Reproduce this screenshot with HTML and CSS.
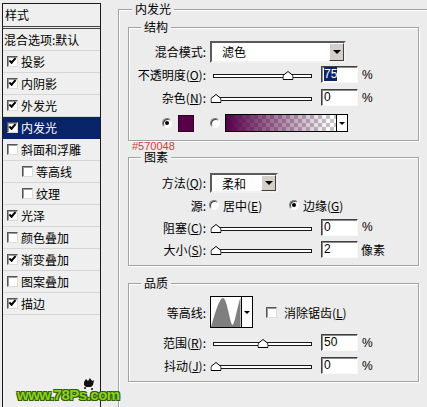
FILE: index.html
```html
<!DOCTYPE html>
<html lang="zh-CN">
<head>
    <meta charset="UTF-8">
    <title>图层样式 - 内发光</title>
    <link rel="stylesheet" href="styles.css">
</head>
<body>
    <div class="dialog">

        <div class="styles">
            <div class="styles-head">样式</div>
            <div class="style-item plain">混合选项:默认</div>
            <div class="style-item"><span class="check on"></span>投影</div>
            <div class="style-item"><span class="check on"></span>内阴影</div>
            <div class="style-item"><span class="check on"></span>外发光</div>
            <div class="style-item active"><span class="check on"></span>内发光</div>
            <div class="style-item"><span class="check"></span>斜面和浮雕</div>
            <div class="style-item sub"><span class="check"></span>等高线</div>
            <div class="style-item sub"><span class="check"></span>纹理</div>
            <div class="style-item"><span class="check on"></span>光泽</div>
            <div class="style-item"><span class="check"></span>颜色叠加</div>
            <div class="style-item"><span class="check on"></span>渐变叠加</div>
            <div class="style-item"><span class="check"></span>图案叠加</div>
            <div class="style-item"><span class="check on"></span>描边</div>
        </div>

        <div class="group outer">
            <span class="group-title outer-title">内发光</span>

            <!-- 结构 -->
            <div class="group block-structure">
                <span class="group-title">结构</span>
                <div class="row">
                    <span class="lbl">混合模式:</span>
                    <div class="select">
                        <span class="select-text">滤色</span>
                        <span class="select-btn"><i class="arrow"></i></span>
                    </div>
                </div>
                <div class="row">
                    <span class="lbl">不透明度(<u>O</u>):</span>
                    <div class="slider"><span class="thumb" style="left: 76%;"><svg width="11" height="9" viewBox="0 0 11 9"><path d="M0.5 8.5V4.5L5.5 0.5L10.5 4.5V8.5Z" fill="#fff" stroke="#000"/></svg></span></div>
                    <span class="field"><span class="sel">75</span></span>
                    <span class="unit">%</span>
                </div>
                <div class="row">
                    <span class="lbl">杂色(<u>N</u>):</span>
                    <div class="slider"><span class="thumb" style="left: 2%;"><svg width="11" height="9" viewBox="0 0 11 9"><path d="M0.5 8.5V4.5L5.5 0.5L10.5 4.5V8.5Z" fill="#fff" stroke="#000"/></svg></span></div>
                    <span class="field">0</span>
                    <span class="unit">%</span>
                </div>
                <div class="row colors">
                    <span class="radio on"></span>
                    <span class="swatch"></span>
                    <span class="radio second"></span>
                    <div class="gradient">
                        <span class="gradient-bar"></span>
                        <span class="gradient-btn"><i class="arrow small"></i></span>
                    </div>
                </div>
            </div>

            <div class="hex">#570048</div>

            <!-- 图素 -->
            <div class="group block-elements">
                <span class="group-title">图素</span>
                <div class="row">
                    <span class="lbl">方法(<u>Q</u>):</span>
                    <div class="select small">
                        <span class="select-text">柔和</span>
                        <span class="select-btn"><i class="arrow"></i></span>
                    </div>
                </div>
                <div class="row short">
                    <span class="lbl">源:</span>
                    <span class="radio first"></span>
                    <span class="opt wide">居中(<u>E</u>)</span>
                    <span class="radio on"></span>
                    <span class="opt">边缘(<u>G</u>)</span>
                </div>
                <div class="row short">
                    <span class="lbl">阻塞(<u>C</u>):</span>
                    <div class="slider"><span class="thumb" style="left: 2%;"><svg width="11" height="9" viewBox="0 0 11 9"><path d="M0.5 8.5V4.5L5.5 0.5L10.5 4.5V8.5Z" fill="#fff" stroke="#000"/></svg></span></div>
                    <span class="field">0</span>
                    <span class="unit">%</span>
                </div>
                <div class="row">
                    <span class="lbl">大小(<u>S</u>):</span>
                    <div class="slider"><span class="thumb" style="left: 2%;"><svg width="11" height="9" viewBox="0 0 11 9"><path d="M0.5 8.5V4.5L5.5 0.5L10.5 4.5V8.5Z" fill="#fff" stroke="#000"/></svg></span></div>
                    <span class="field">2</span>
                    <span class="unit cjk">像素</span>
                </div>
            </div>

            <!-- 品质 -->
            <div class="group block-quality">
                <span class="group-title">品质</span>
                <div class="row tall">
                    <span class="lbl">等高线:</span>
                    <div class="contour">
                        <svg width="30" height="30" viewBox="0 0 30 30">
                            <path d="M0 30C3 20 8 1 12 1C16 1 19 27 21.5 28C24 27 27 6 29.5 1L29.5 30Z" fill="#7f7f7f"/>
                        </svg>
                        <span class="contour-btn"><i class="arrow small"></i></span>
                    </div>
                    <span class="check aa"></span>
                    <span class="opt">消除锯齿(<u>L</u>)</span>
                </div>
                <div class="row gap">
                    <span class="lbl">范围(<u>R</u>):</span>
                    <div class="slider"><span class="thumb" style="left: 50%;"><svg width="11" height="9" viewBox="0 0 11 9"><path d="M0.5 8.5V4.5L5.5 0.5L10.5 4.5V8.5Z" fill="#fff" stroke="#000"/></svg></span></div>
                    <span class="field">50</span>
                    <span class="unit">%</span>
                </div>
                <div class="row">
                    <span class="lbl">抖动(<u>J</u>):</span>
                    <div class="slider"><span class="thumb" style="left: 2%;"><svg width="11" height="9" viewBox="0 0 11 9"><path d="M0.5 8.5V4.5L5.5 0.5L10.5 4.5V8.5Z" fill="#fff" stroke="#000"/></svg></span></div>
                    <span class="field">0</span>
                    <span class="unit">%</span>
                </div>
            </div>
        </div>

        <svg class="mark-icon" width="13" height="13" viewBox="0 0 13 13">
            <path d="M2 5L4 2L6 4L8 1L10 4L12 3L11 8L9 10H4L2 8Z" fill="#111"/>
            <circle cx="3" cy="11" r="1" fill="#111"/>
            <circle cx="10" cy="12" r="1" fill="#111"/>
        </svg>
        <div class="watermark">www.78Ps.com</div>
    </div>
</body>
</html>
```

FILE: styles.css
```css
* {
    box-sizing: border-box;
}
body {
    margin: 0;
    width: 427px;
    height: 407px;
    overflow: hidden;
    background-color: #ececec;
    font-family: "Noto Sans CJK SC", "DejaVu Sans", sans-serif;
    font-size: 12px;
    color: #000;
}
u {
    text-decoration: underline;
}
.dialog {
    position: relative;
    display: flex;
    align-items: flex-start;
    height: 407px;
}

/* left list */
.styles {
    flex: none;
    margin: 3px 0 0 2px;
    width: 99px;
    height: 404px;
    border: 1px solid #1a1a1a;
    border-bottom: none;
    background-color: #efefef;
}
.styles-head {
    height: 25px;
    line-height: 22px;
    padding-left: 2px;
    border-bottom: 3px double #444;
}
.style-item {
    display: flex;
    align-items: center;
    height: 22px;
    padding-left: 4px;
    border-bottom: 1px solid #d6d6d6;
    white-space: nowrap;
}
.style-item.plain {
    padding-left: 1px;
}
.style-item.sub {
    padding-left: 19px;
}
.style-item.active {
    background-color: #0a246a;
    color: #fff;
    border-bottom-color: #0a246a;
}
.check {
    position: relative;
    flex: none;
    width: 11px;
    height: 11px;
    margin-right: 3px;
    background-color: #fff;
    border: 1px solid;
    border-color: #555 #dcdcdc #dcdcdc #555;
    box-shadow: inset 1px 1px 0 #9a9a9a;
}
.check.on::after {
    content: "";
    position: absolute;
    left: 1px;
    top: 1px;
    width: 5px;
    height: 2px;
    border-left: 2px solid #000;
    border-bottom: 2px solid #000;
    transform: rotate(-48deg);
}

/* group boxes */
.group {
    position: relative;
    flex: none;
    border: 1px solid #a2a2a2;
    box-shadow: inset 1px 1px 0 #fff, 1px 1px 0 #fff;
}
.group-title {
    position: absolute;
    top: -7px;
    left: 12px;
    padding: 0 3px;
    line-height: 12px;
    background-color: #ececec;
}
.outer {
    margin: 9px 0 0 17px;
    width: 309px;
    height: 398px;
    padding-left: 9px;
    border-right: none;
    border-bottom: none;
    box-shadow: inset 1px 1px 0 #fff;
}
.outer-title {
    left: 13px;
}
.block-structure {
    margin-top: 17px;
    width: 291px;
    height: 114px;
    padding-top: 12px;
}
.block-elements {
    margin-top: 4px;
    width: 291px;
    height: 109px;
    padding-top: 13px;
}
.block-quality {
    margin-top: 17px;
    width: 291px;
    height: 99px;
    padding-top: 11px;
}
.hex {
    position: relative;
    z-index: 1;
    height: 12px;
    margin-left: 4px;
    font-family: "Liberation Sans", Arial, sans-serif;
    font-size: 11px;
    line-height: 10px;
    color: #d23c3c;
}

/* rows */
.row {
    display: flex;
    align-items: center;
    height: 23px;
    white-space: nowrap;
}
.row.short {
    height: 22px;
}
.row.tall {
    height: 34px;
}
.row.gap {
    margin-top: 2px;
}
.lbl {
    flex: none;
    width: 77px;
    text-align: right;
}
.select {
    display: flex;
    margin-left: 4px;
    width: 136px;
    height: 22px;
    background-color: #fff;
    border: 2px solid;
    border-color: #5a5a5a #f2f2f2 #f2f2f2 #5a5a5a;
}
.select.small {
    width: 68px;
    height: 20px;
}
.select-text {
    flex: 1;
    padding-left: 10px;
    line-height: 17px;
}
.select-btn {
    display: flex;
    align-items: center;
    justify-content: center;
    width: 15px;
    background-color: #d4d0c8;
    border: 1px solid;
    border-color: #fff #404040 #404040 #fff;
}
.arrow {
    width: 0;
    height: 0;
    border-left: 4px solid transparent;
    border-right: 4px solid transparent;
    border-top: 4px solid #000;
}
.arrow.small {
    border-left-width: 3px;
    border-right-width: 3px;
    border-top-width: 3px;
}
.slider {
    position: relative;
    flex: none;
    margin: 3px 0 0 7px;
    width: 99px;
    height: 4px;
    background-color: #fff;
    border: 1px solid #1a1a1a;
}
.thumb {
    position: absolute;
    bottom: -3px;
    width: 11px;
    height: 9px;
    transform: translateX(-50%);
}
.thumb svg {
    display: block;
}
.field {
    flex: none;
    margin-left: 9px;
    width: 37px;
    height: 17px;
    padding-left: 2px;
    background-color: #fff;
    border: 1px solid;
    border-color: #404040 #fafafa #fafafa #404040;
    box-shadow: inset 1px 1px 0 #8a8a8a;
    font-family: "Liberation Sans", Arial, sans-serif;
    font-size: 12px;
    line-height: 15px;
}
.sel {
    background-color: #0a246a;
    color: #fff;
}
.unit {
    margin-left: 4px;
    font-family: "Liberation Sans", Arial, sans-serif;
}
.unit.cjk {
    margin-left: 3px;
    font-family: "Noto Sans CJK SC", sans-serif;
}

/* colour row */
.row.colors {
    margin-top: 3px;
    height: 22px;
    padding-left: 33px;
}
.radio {
    position: relative;
    flex: none;
    width: 10px;
    height: 10px;
    border-radius: 50%;
    background-color: #fff;
    border: 1px solid;
    border-color: #808080 #fff #fff #808080;
    box-shadow: inset 1px 1px 0 #404040;
}
.radio.on::after {
    content: "";
    position: absolute;
    left: 2px;
    top: 2px;
    width: 4px;
    height: 4px;
    border-radius: 50%;
    background-color: #000;
}
.radio.second {
    margin-left: 16px;
}
.radio.first {
    margin-left: 3px;
}
.swatch {
    flex: none;
    margin-left: 6px;
    width: 16px;
    height: 17px;
    background-color: #570048;
    border: 1px solid #2e0026;
}
.gradient {
    display: flex;
    margin-left: 5px;
    width: 123px;
    height: 18px;
    border: 1px solid #000;
}
.gradient-bar {
    flex: 1;
    background: linear-gradient(to right, #570048, rgba(87, 0, 72, 0) 95%),
        repeating-conic-gradient(#c4c4c4 0 25%, #fff 0 50%) 0 0 / 8px 8px;
}
.gradient-btn,
.contour-btn {
    display: flex;
    align-items: center;
    justify-content: center;
    background-color: #fff;
    border-left: 1px solid #000;
}
.gradient-btn {
    width: 11px;
}
.opt {
    margin-left: 4px;
}
.opt.wide {
    width: 66px;
}

/* contour */
.contour {
    display: flex;
    flex: none;
    margin-left: 4px;
    width: 43px;
    height: 32px;
    background-color: #fff;
    border: 1px solid #000;
}
.contour svg {
    display: block;
}
.contour-btn {
    flex: 1;
}
.check.aa {
    margin: 0 3px 0 13px;
}

/* watermark */
.watermark {
    position: absolute;
    left: 17px;
    top: 386px;
    font-family: "Liberation Sans", Arial, sans-serif;
    font-size: 15px;
    font-weight: bold;
    letter-spacing: -0.5px;
    color: #8cd21e;
    text-shadow: -1px -1px 0 #2f5c05, 1px -1px 0 #2f5c05, -1px 1px 0 #2f5c05, 1px 1px 0 #2f5c05;
}
.mark-icon {
    position: absolute;
    left: 82px;
    top: 377px;
}
```
